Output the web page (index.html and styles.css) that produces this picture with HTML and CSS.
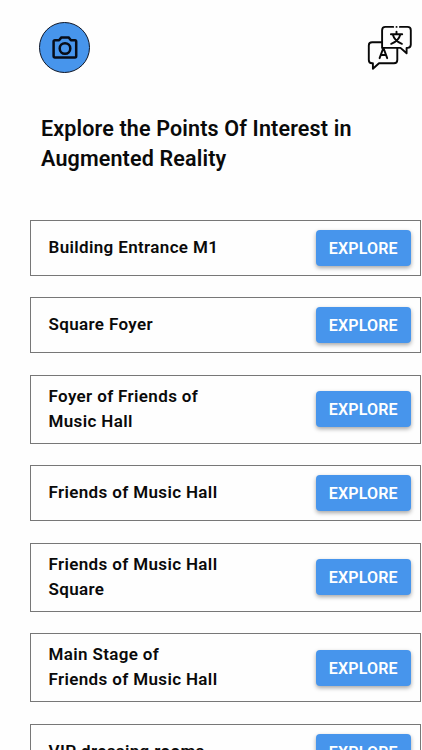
FILE: index.html
```html
<!DOCTYPE html>
<html lang="en">
<head>
<meta charset="utf-8">
<title>Points Of Interest</title>
<link rel="stylesheet" href="styles.css">
</head>
<body>
<header class="topbar">
  <button class="camera" aria-label="Camera">
    <svg width="26" height="24" viewBox="0 0 26 24" fill="none" stroke="#080d18" stroke-width="2.5" stroke-linejoin="round">
      <path d="M3 4.2H7.1L9.4 1.4H16.6L18.9 4.2H23Q24.2 4.2 24.2 5.6V20Q24.2 21.4 23 21.4H3Q1.6 21.4 1.6 20V5.6Q1.6 4.2 3 4.2Z"/>
      <circle cx="13" cy="12.5" r="5.3"/>
    </svg>
  </button>
  <svg class="translate" width="46" height="46" viewBox="0 0 46 46" fill="none" stroke="#080808" stroke-width="1.9" stroke-linecap="round" stroke-linejoin="round">
    <path d="M26.2 2.9H18.4Q15.1 2.9 15.1 6.2V23.9H33.5L39.6 29.3V23.9H40.5Q43.8 23.9 43.8 20.6V6.2Q43.8 2.9 40.5 2.9H32.9M29.5 2.9H29.6"/>
    <path d="M15.1 18.2H5.1Q1.8 18.2 1.8 21.5V36Q1.8 39.3 5.1 39.3H5.9V44.8L12 39.3H27Q30.3 39.3 30.3 36V23.9"/>
    <path d="M12.6 34.2L16.4 23.9L20.2 34.2M13.8 31H19"/>
    <path d="M23.9 10.2H35.2M29.5 7.6V10.2M33.3 10.5Q31.8 16.9 24.2 19.8M25.8 10.5Q27.4 16.9 34.9 19.8"/>
  </svg>
</header>
<main>
  <h1>Explore the Points Of Interest in Augmented Reality</h1>
  <ul class="list">
    <li class="card"><span class="name">Building Entrance M1</span><button class="explore">EXPLORE</button></li>
    <li class="card"><span class="name">Square Foyer</span><button class="explore">EXPLORE</button></li>
    <li class="card"><span class="name">Foyer of Friends of<br>Music Hall</span><button class="explore">EXPLORE</button></li>
    <li class="card"><span class="name">Friends of Music Hall</span><button class="explore">EXPLORE</button></li>
    <li class="card"><span class="name">Friends of Music Hall<br>Square</span><button class="explore">EXPLORE</button></li>
    <li class="card"><span class="name">Main Stage of<br>Friends of Music Hall</span><button class="explore">EXPLORE</button></li>
    <li class="card"><span class="name">VIP dressing rooms</span><button class="explore">EXPLORE</button></li>
  </ul>
</main>
</body>
</html>
```
FILE: styles.css
```css
* { box-sizing: border-box; }
html { overflow: hidden; }
body {
  margin: 0;
  height: 750px;
  overflow: hidden;
  background: #fefefe;
  color: #0a0a0a;
  font-family: Roboto, sans-serif;
  font-weight: 600;
}
.topbar {
  display: flex;
  justify-content: space-between;
  align-items: flex-start;
  padding: 22px 9px 0 39px;
  height: 113.6px;
}
.camera {
  display: flex;
  align-items: center;
  justify-content: center;
  width: 51px;
  height: 51px;
  padding: 0;
  border: 1.5px solid #0d1526;
  border-radius: 50%;
  background: #4795ec;
}
.translate { margin-top: 2px; }
h1 {
  margin: 0 60px 0 41px;
  font-size: 21.5px;
  font-weight: 600;
  line-height: 30.4px;
  letter-spacing: 0.15px;
}
.list {
  display: flex;
  flex-direction: column;
  gap: 21.5px;
  margin: 45.1px 1.5px 0 30px;
  padding: 0;
  list-style: none;
}
.card {
  display: flex;
  flex-shrink: 0;
  justify-content: space-between;
  align-items: center;
  min-height: 56px;
  padding: 8.8px 8.5px 8.8px 17.5px;
  border: 1px solid #777;
}
.name {
  margin: -0.4px 0 0.4px;
  font-size: 17px;
  line-height: 24.7px;
  letter-spacing: 0.36px;
}
.explore {
  width: 95.5px;
  height: 36px;
  padding: 1px 0 0;
  border: 0;
  border-radius: 4px;
  background: #4795ec;
  box-shadow: 0 2px 4px rgba(0, 0, 0, 0.35);
  color: #fff;
  font: 600 16px/35px Roboto, sans-serif;
  letter-spacing: 0.15px;
}
```
